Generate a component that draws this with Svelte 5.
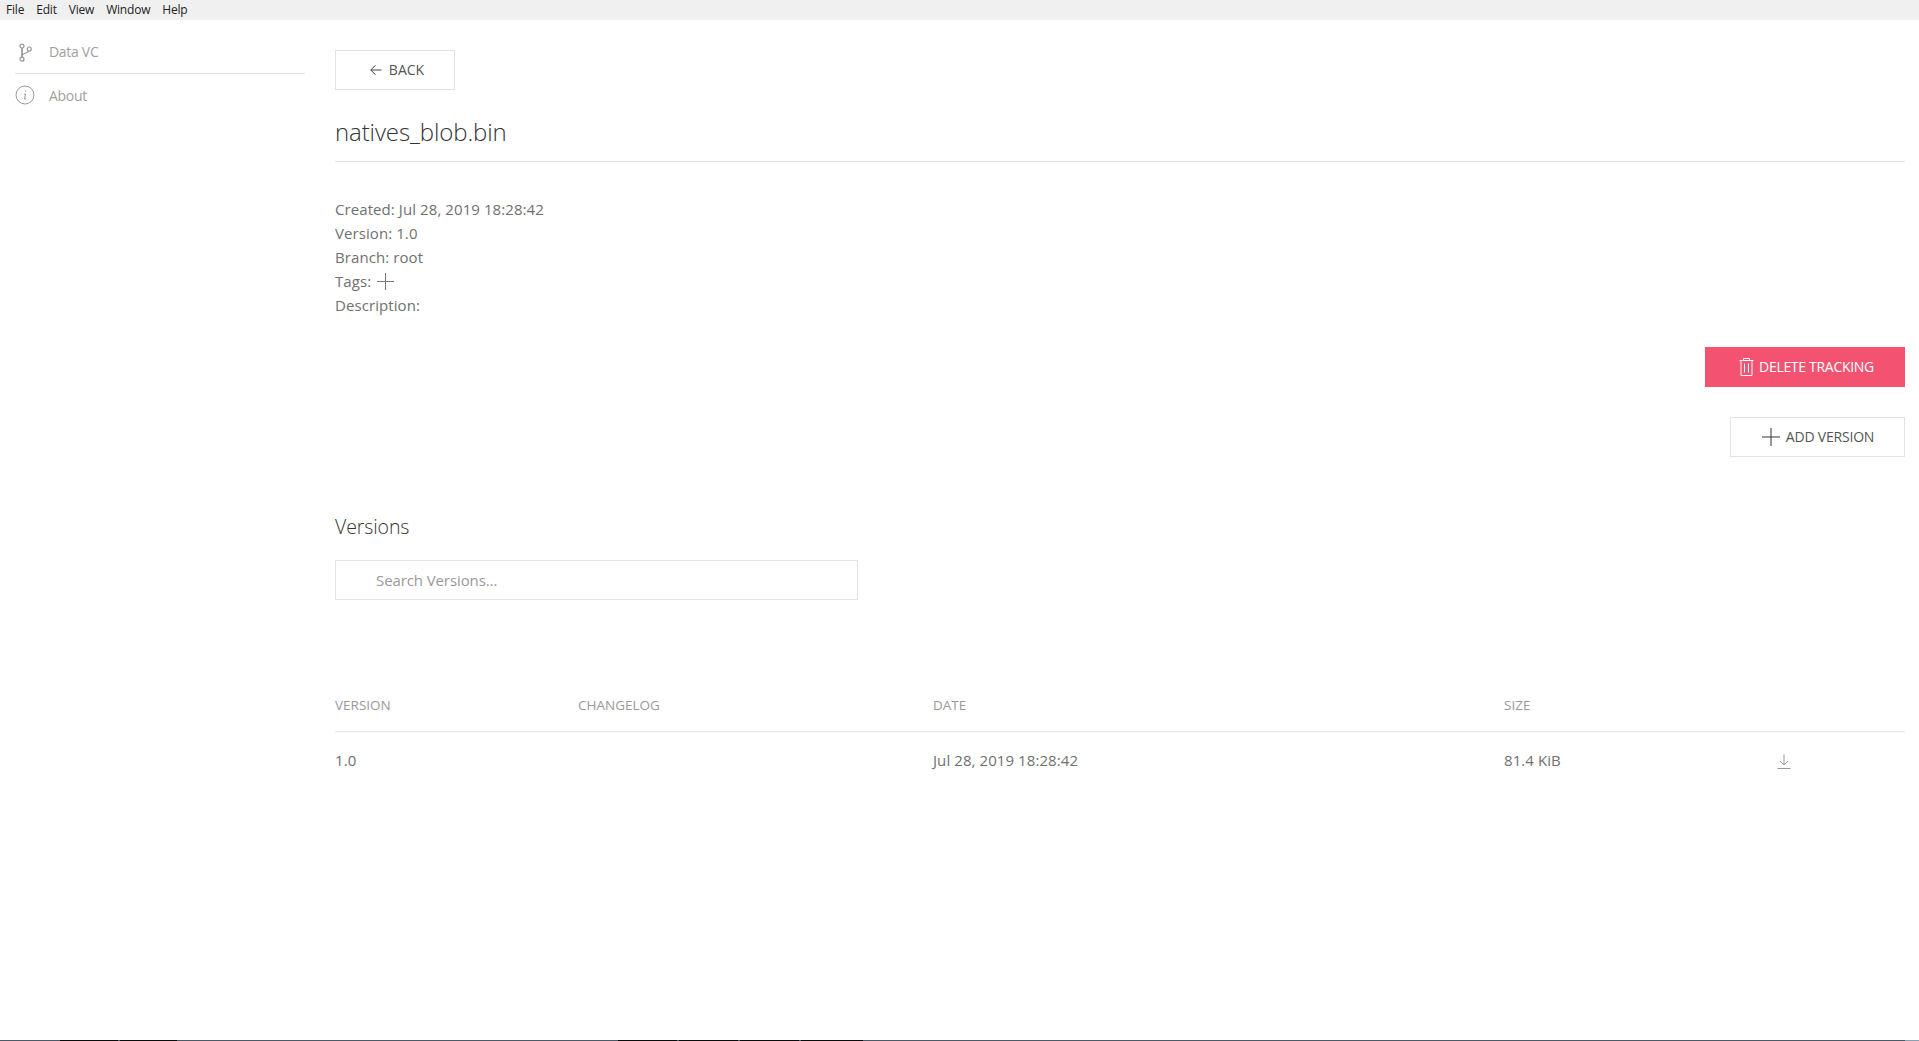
<script>
  const columns = ['VERSION', 'CHANGELOG', 'DATE', 'SIZE'];
  const menu = ['File', 'Edit', 'View', 'Window', 'Help'];
</script>

<div class="window">
  <nav class="menubar">
    {#each menu as item}<span>{item}</span>{/each}
  </nav>
  <div class="body">
    <aside class="sidebar">
      <a class="navitem first">
        <svg class="branch" width="20" height="20" viewBox="0 0 20 20" fill="none" stroke="#999" stroke-width="1.2">
          <circle cx="7" cy="3.2" r="2"/>
          <circle cx="7" cy="16.200" r="2"/>
          <circle cx="14.300" cy="6" r="2"/>
          <path d="M7 5.200V14.200" stroke-width="1.800"/>
          <path d="M7 12.500C7.500 10 13 10.500 13.600 7.800"/>
        </svg>
        <span>Data VC</span>
      </a>
      <a class="navitem second">
        <svg width="20" height="20" viewBox="0 0 20 20" fill="none" stroke="#9a9a9a" stroke-width="1">
          <circle cx="10" cy="10" r="9"/>
          <path d="M10.600 5.600v1.200M9 9.200h1.500L9.500 14h1.600"/>
        </svg>
        <span>About</span>
      </a>
    </aside>
    <main class="content">
      <button class="btn back">
        <svg width="12" height="12" viewBox="0 0 12 12" fill="none" stroke="#444" stroke-width="1"><path d="M11.500 6H.8M5.500 1.200L.8 6l4.700 4.800"/></svg>
        BACK
      </button>
      <h1>natives_blob.bin</h1>
      <div class="meta">
        <div>Created: Jul 28, 2019 18:28:42</div>
        <div>Version: 1.0</div>
        <div>Branch: root</div>
        <div class="tags">Tags:
          <svg width="17" height="17" viewBox="0 0 17 17" stroke="#777" stroke-width="1"><path d="M0 8.500H17M8.500 0V17"/></svg>
        </div>
        <div>Description:</div>
      </div>
      <div class="actions">
        <button class="btn danger">
          <svg width="15" height="19" viewBox="0 0 15 19" fill="none" stroke="#fff" stroke-width="1"><path d="M.5 3.500h14M4.500 3.500V1.500h6v2M2 3.500v15h11v-15M5.500 6.500v9M9.500 6.500v9"/></svg>
          DELETE TRACKING
        </button>
        <button class="btn add">
          <svg width="18" height="18" viewBox="0 0 18 18" stroke="#333" stroke-width="1"><path d="M0 9H18M9 0V18"/></svg>
          ADD VERSION
        </button>
      </div>
      <h2>Versions</h2>
      <input class="search" placeholder="Search Versions..." />
      <div class="row head">
        {#each columns as c}<span>{c}</span>{/each}<span></span>
      </div>
      <div class="row data">
        <span>1.0</span>
        <span></span>
        <span>Jul 28, 2019 18:28:42</span>
        <span>81.4 KiB</span>
        <span class="dl">
          <svg width="14" height="15" viewBox="0 0 14 15" fill="none" stroke="#999" stroke-width="1"><path d="M7 .5V11M3 7l4 4 4-4M.5 14.500h13"/></svg>
        </span>
      </div>
    </main>
  </div>
  <div class="edge">
    <i class="slate s1"></i><i class="dark d1"></i><i class="dark d2"></i>
    <i class="slate s2"></i><i class="dark d3"></i><i class="dark d3"></i><i class="dark d3"></i><i class="dark d4"></i>
    <i class="slate s3"></i><i class="light"></i>
  </div>
</div>

<style>
  :global(body) { margin: 0; background: #fff; }
  .window {
    height: 1041px;
    position: relative;
    display: flex;
    flex-direction: column;
    font-family: "Open Sans", "Noto Sans", sans-serif;
    overflow: hidden;
  }
  .menubar {
    height: 20px;
    flex: none;
    background: #f0f0f0;
    display: flex;
    gap: 12px;
    padding-left: 6px;
    font-size: 12px;
    line-height: 20px;
    color: #222;
    letter-spacing: -0.2px;
  }
  .body { flex: 1; display: flex; min-height: 0; }
  .sidebar { width: 320px; flex: none; padding: 14px 0 0 15px; box-sizing: border-box; }
  .navitem {
    width: 290px;
    display: flex;
    align-items: center;
    gap: 14px;
    font-size: 14px;
    letter-spacing: -0.3px;
    color: #a0a0a0;
    box-sizing: border-box;
  }
  .navitem svg { flex: none; }
  .navitem svg.branch { margin-top: 3px; }
  .navitem.first { height: 40px; border-bottom: 1px solid #e3e3e3; padding-bottom: 5px; }
  .navitem.second { height: 42px; }
  .content { flex: 1; padding: 30px 14px 0 15px; min-width: 0; }
  .btn {
    font: inherit;
    height: 40px;
    box-sizing: border-box;
    background: #fff;
    border: 1px solid #e3e3e3;
    display: inline-flex;
    align-items: center;
    justify-content: center;
    gap: 6px;
    font-size: 14px;
    letter-spacing: -0.2px;
    color: #555;
    padding: 0 0 1px;
  }
  .back { width: 120px; display: flex; padding-left: 4px; letter-spacing: 0; gap: 7px; }
  h1 {
    margin: 0;
    padding: 23px 0 10px;
    font-weight: 300;
    font-size: 24px;
    line-height: 38px;
    color: #333;
    border-bottom: 1px solid #e3e3e3;
    letter-spacing: -0.1px;
  }
  .meta {
    margin-top: 35px;
    font-size: 15px;
    line-height: 24px;
    color: #707070;
    letter-spacing: 0.08px;
  }
  .tags { display: flex; align-items: center; gap: 6px; }
  .actions { display: flex; flex-direction: column; align-items: flex-end; gap: 30px; margin-top: 30px; }
  .danger { width: 200px; background: #f35370; border: none; color: #fff; letter-spacing: -0.3px; padding-left: 3px; gap: 5px; }
  .add { width: 175px; padding-left: 1px; }
  h2 {
    margin: 56px 0 0;
    font-weight: 300;
    font-size: 19.500px;
    line-height: 28px;
    color: #333;
    letter-spacing: -0.1px;
  }
  .search {
    display: block;
    margin-top: 19px;
    width: 523px;
    height: 40px;
    box-sizing: border-box;
    border: 1px solid #e3e3e3;
    padding: 0 0 0 40px;
    font: inherit;
    font-size: 15px;
    letter-spacing: -0.1px;
    outline: none;
  }
  .search::placeholder { color: #999; opacity: 1; }
  .row {
    display: grid;
    grid-template-columns: 243px 355px 571px 271px 1fr;
    align-items: center;
  }
  .head {
    margin-top: 82px;
    height: 50px;
    padding-bottom: 4px;
    box-sizing: border-box;
    border-bottom: 1px solid #e3e3e3;
    font-size: 13.500px;
    color: #999;
    letter-spacing: 0;
  }
  .data { height: 56px; font-size: 15px; color: #707070; letter-spacing: 0.08px; }
  .dl { display: flex; padding: 3px 0 0 2px; }
  .edge {
    position: absolute;
    left: 0; right: 0; top: 1040px;
    height: 1px;
    display: flex;
  }
  .edge i { display: block; height: 1px; }
  .slate { background: #4a5a68; }
  .s1 { width: 60px; }
  .s2 { width: 441px; }
  .s3 { flex: 1; }
  .dark { background: #0a0a0a; border-right: 2px solid #4a5a68; box-sizing: border-box; }
  .d1 { width: 60px; }
  .d2 { width: 57px; border-right: none; }
  .d3 { width: 61px; }
  .d4 { width: 62px; border-right: none; }
  .light { width: 14px; background: #8aa0b4; }
</style>
